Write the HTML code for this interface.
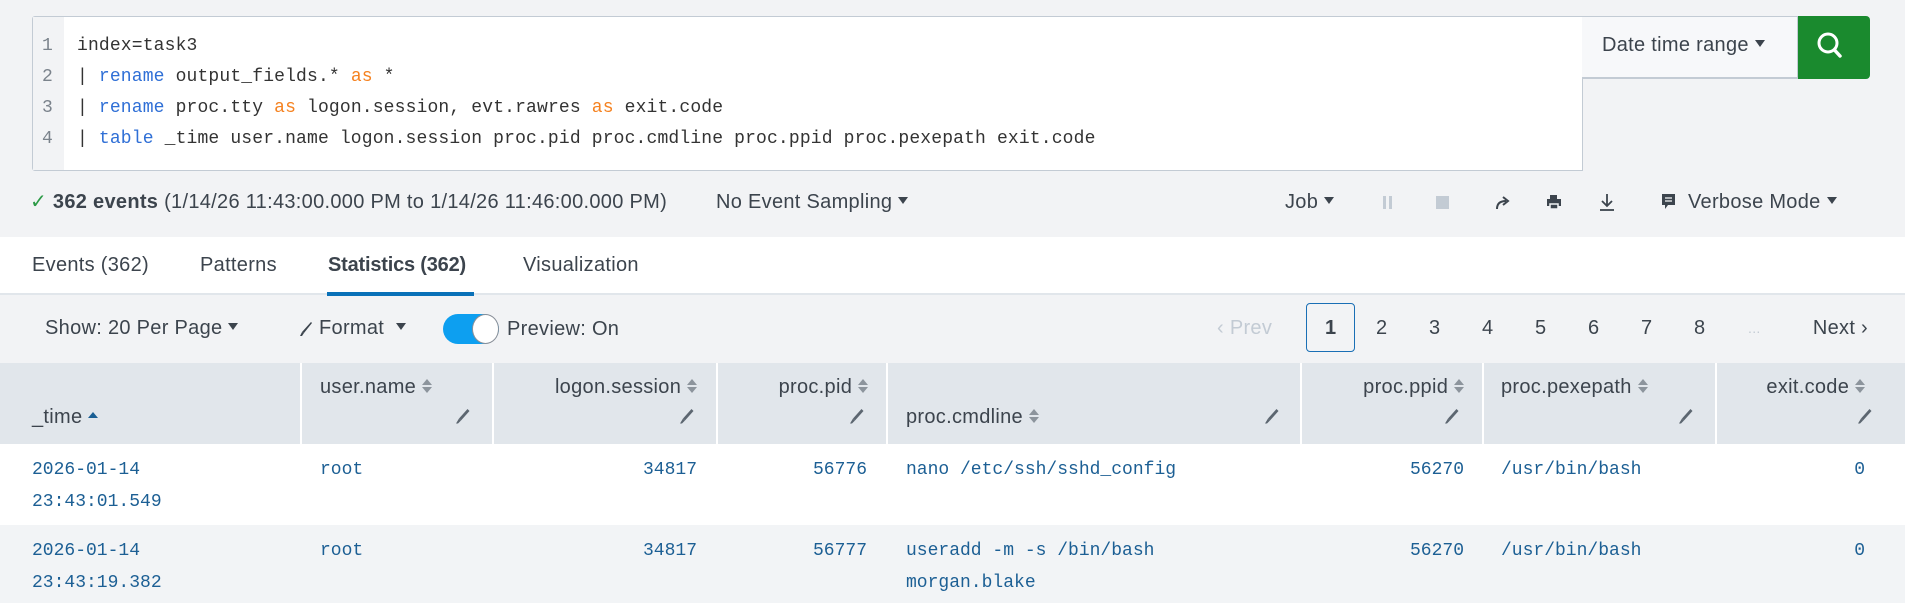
<!DOCTYPE html>
<html><head><meta charset="utf-8"><style>
*{margin:0;padding:0;box-sizing:border-box}
body{width:1905px;height:603px;background:#f2f3f5;font-family:"Liberation Sans",sans-serif;color:#3c444d;position:relative;overflow:hidden}
.a{position:absolute;white-space:nowrap}
.mono{font-family:"Liberation Mono",monospace}
.t{font-size:20px;line-height:22px;letter-spacing:0.3px}
.code{font-size:18px;line-height:22px;color:#333;letter-spacing:0.15px}
.kw{color:#2f6fd6}.as{color:#f58220}
.ln{color:#7b838c;font-size:18px;line-height:22px;font-family:"Liberation Mono",monospace}
.car{display:inline-block;width:0;height:0;border-left:5px solid transparent;border-right:5px solid transparent;border-top:7px solid #3c444d;vertical-align:middle;margin-left:6px;position:relative;top:-2px}
.d{font-family:"Liberation Mono",monospace;font-size:18px;line-height:22px;color:#1c5f94}
.hd{font-size:20px;line-height:22px;color:#3c444d;letter-spacing:0.3px}
.col{position:absolute;top:363px;height:81px;border-left:2px solid #fff}
</style></head><body>

<div class="a" style="left:32px;top:16px;width:1551px;height:155px;background:#fff;border:1px solid #c3cbd4;border-radius:3px 0 0 3px"></div>
<div class="a" style="left:33px;top:17px;width:31px;height:153px;background:#f2f3f5"></div>
<div class="a ln" style="left:42px;top:35px">1</div>
<div class="a ln" style="left:42px;top:66px">2</div>
<div class="a ln" style="left:42px;top:97px">3</div>
<div class="a ln" style="left:42px;top:128px">4</div>
<div class="a mono code" style="left:77px;top:35px">index=task3</div>
<div class="a mono code" style="left:77px;top:66px">| <span class="kw">rename</span> output_fields.* <span class="as">as</span> *</div>
<div class="a mono code" style="left:77px;top:97px">| <span class="kw">rename</span> proc.tty <span class="as">as</span> logon.session, evt.rawres <span class="as">as</span> exit.code</div>
<div class="a mono code" style="left:77px;top:128px">| <span class="kw">table</span> _time user.name logon.session proc.pid proc.cmdline proc.ppid proc.pexepath exit.code</div>

<div class="a" style="left:1582px;top:16px;width:216px;height:63px;background:#f7f8fa;border:1px solid #c3cbd4;border-left:none;border-bottom:2px solid #c3cbd4"></div>
<div class="a t" style="left:1602px;top:34px;color:#3c444d">Date time range<span class="car"></span></div>
<div class="a" style="left:1798px;top:16px;width:72px;height:63px;background:#1a8a2e;border-radius:0 4px 4px 0"></div>
<svg class="a" style="left:1815px;top:30px" width="30" height="32" viewBox="0 0 30 32"><circle cx="13" cy="13" r="9" fill="none" stroke="#fff" stroke-width="3"/><line x1="19.5" y1="20" x2="25" y2="26" stroke="#fff" stroke-width="3.5" stroke-linecap="round"/></svg>

<div class="a t" style="left:30px;top:191px;color:#3c444d"><span style="color:#2c9a46">✓</span> <b>362 events</b> (1/14/26 11:43:00.000 PM to 1/14/26 11:46:00.000 PM)</div>
<div class="a t" style="left:716px;top:191px">No Event Sampling<span class="car"></span></div>
<div class="a t" style="left:1285px;top:191px">Job<span class="car"></span></div>
<div class="a" style="left:1383px;top:196px;width:3px;height:13px;background:#c3cbd4"></div>
<div class="a" style="left:1389px;top:196px;width:3px;height:13px;background:#c3cbd4"></div>
<div class="a" style="left:1436px;top:196px;width:13px;height:13px;background:#c3cbd4"></div>
<svg class="a" style="left:1494px;top:193px" width="18" height="18" viewBox="0 0 18 18"><path d="M3 16 Q3 8 12 8" fill="none" stroke="#3c444d" stroke-width="2"/><path d="M9 4 L14 8 L9 12" fill="none" stroke="#3c444d" stroke-width="2"/></svg>
<svg class="a" style="left:1546px;top:194px" width="16" height="16" viewBox="0 0 16 16"><rect x="4" y="1" width="7" height="5" fill="#3c444d"/><rect x="1" y="5" width="14" height="7" fill="#3c444d"/><rect x="4" y="10" width="8" height="5" fill="#3c444d" stroke="#f2f3f5" stroke-width="1.5"/></svg>
<svg class="a" style="left:1598px;top:192px" width="18" height="20" viewBox="0 0 18 20"><line x1="9" y1="2" x2="9" y2="14" stroke="#3c444d" stroke-width="1.8"/><path d="M4 9 L9 14 L14 9" fill="none" stroke="#3c444d" stroke-width="1.8"/><line x1="2" y1="18" x2="16" y2="18" stroke="#3c444d" stroke-width="1.8"/></svg>
<svg class="a" style="left:1661px;top:193px" width="16" height="18" viewBox="0 0 16 18"><path d="M1 1 H14 V12 H7 L4 16 V12 H1 Z" fill="#3c444d"/><line x1="4" y1="5" x2="11" y2="5" stroke="#f2f3f5" stroke-width="1.3"/><line x1="4" y1="8" x2="11" y2="8" stroke="#f2f3f5" stroke-width="1.3"/></svg>
<div class="a t" style="left:1688px;top:191px">Verbose Mode<span class="car"></span></div>

<div class="a" style="left:0;top:237px;width:1905px;height:58px;background:#fff;border-bottom:2px solid #e1e6eb"></div>
<div class="a t" style="left:32px;top:254px">Events (362)</div>
<div class="a t" style="left:200px;top:254px">Patterns</div>
<div class="a t" style="left:328px;top:254px;font-weight:bold;letter-spacing:-0.2px">Statistics (362)</div>
<div class="a t" style="left:523px;top:254px">Visualization</div>
<div class="a" style="left:327px;top:292px;width:147px;height:4px;background:#0a71b8"></div>

<div class="a t" style="left:45px;top:317px">Show: 20 Per Page<span class="car"></span></div>
<svg class="a" style="left:299px;top:321px" width="14" height="16" viewBox="0 0 14 16"><path d="M12 1 L13 2 L5 12 L3 11 Z" fill="#3c444d"/><path d="M3 11 L5 12 L3 15 L1 15 Z" fill="#3c444d"/></svg>
<div class="a t" style="left:319px;top:317px">Format<span class="car" style="margin-left:12px"></span></div>
<div class="a" style="left:443px;top:314px;width:56px;height:30px;background:#0d9ff0;border-radius:15px"></div>
<div class="a" style="left:472px;top:314px;width:27px;height:30px;background:#fff;border-radius:50%;border:1px solid #8a9099"></div>
<div class="a t" style="left:507px;top:318px">Preview: On</div>

<div class="a t" style="left:1217px;top:317px;color:#c3cbd4">‹ Prev</div>
<div class="a" style="left:1306px;top:303px;width:49px;height:49px;border:1px solid #1a6fb5;border-radius:4px"></div>
<div class="a t" style="left:1325px;top:317px;font-weight:bold">1</div>
<div class="a t" style="left:1376px;top:317px">2</div>
<div class="a t" style="left:1429px;top:317px">3</div>
<div class="a t" style="left:1482px;top:317px">4</div>
<div class="a t" style="left:1535px;top:317px">5</div>
<div class="a t" style="left:1588px;top:317px">6</div>
<div class="a t" style="left:1641px;top:317px">7</div>
<div class="a t" style="left:1694px;top:317px">8</div>
<div class="a t" style="left:1748px;top:317px;color:#c3cbd4;font-size:14px">...</div>
<div class="a t" style="right:37px;top:317px">Next ›</div>

<div class="a" style="left:0;top:363px;width:1905px;height:81px;background:#e1e6eb"></div>
<div class="col" style="left:300px"></div><div class="col" style="left:492px"></div><div class="col" style="left:716px"></div><div class="col" style="left:886px"></div><div class="col" style="left:1300px"></div><div class="col" style="left:1482px"></div><div class="col" style="left:1715px"></div>

<svg width="0" height="0" style="position:absolute"><defs>
<g id="srt"><path d="M0 7 L5 1 L10 7 Z" fill="#8c949c"/><path d="M0 9 L5 15 L10 9 Z" fill="#8c949c"/></g>
<g id="pen"><path d="M12.5 1 L14.5 3 L6 12.5 L4 10.5 Z" fill="#5c6670"/><path d="M4 10.5 L6 12.5 L3 15.5 L1 15.5 Z" fill="#5c6670"/></g>
</defs></svg>

<div class="a hd" style="left:32px;top:406px">_time <svg width="10" height="8" style="vertical-align:4px"><path d="M0 7 L5 1 L10 7 Z" fill="#1a5f94"/></svg></div>
<div class="a hd" style="left:320px;top:376px">user.name <svg width="10" height="16" style="vertical-align:-1px"><use href="#srt"/></svg></div>
<svg class="a" style="left:455px;top:408px" width="16" height="17"><use href="#pen"/></svg>
<div class="a hd" style="right:1208px;top:376px">logon.session <svg width="10" height="16" style="vertical-align:-1px"><use href="#srt"/></svg></div>
<svg class="a" style="left:679px;top:408px" width="16" height="17"><use href="#pen"/></svg>
<div class="a hd" style="right:1037px;top:376px">proc.pid <svg width="10" height="16" style="vertical-align:-1px"><use href="#srt"/></svg></div>
<svg class="a" style="left:849px;top:408px" width="16" height="17"><use href="#pen"/></svg>
<div class="a hd" style="left:906px;top:406px">proc.cmdline <svg width="10" height="16" style="vertical-align:-1px"><use href="#srt"/></svg></div>
<svg class="a" style="left:1264px;top:408px" width="16" height="17"><use href="#pen"/></svg>
<div class="a hd" style="right:441px;top:376px">proc.ppid <svg width="10" height="16" style="vertical-align:-1px"><use href="#srt"/></svg></div>
<svg class="a" style="left:1444px;top:408px" width="16" height="17"><use href="#pen"/></svg>
<div class="a hd" style="left:1501px;top:376px">proc.pexepath <svg width="10" height="16" style="vertical-align:-1px"><use href="#srt"/></svg></div>
<svg class="a" style="left:1678px;top:408px" width="16" height="17"><use href="#pen"/></svg>
<div class="a hd" style="right:40px;top:376px">exit.code <svg width="10" height="16" style="vertical-align:-1px"><use href="#srt"/></svg></div>
<svg class="a" style="left:1857px;top:408px" width="16" height="17"><use href="#pen"/></svg>

<div class="a" style="left:0;top:444px;width:1905px;height:81px;background:#fff"></div>
<div class="a" style="left:0;top:525px;width:1905px;height:78px;background:#f2f4f6"></div>

<div class="a d" style="left:32px;top:459px">2026-01-14</div>
<div class="a d" style="left:32px;top:491px">23:43:01.549</div>
<div class="a d" style="left:320px;top:459px">root</div>
<div class="a d" style="right:1208px;top:459px">34817</div>
<div class="a d" style="right:1038px;top:459px">56776</div>
<div class="a d" style="left:906px;top:459px">nano /etc/ssh/sshd_config</div>
<div class="a d" style="right:441px;top:459px">56270</div>
<div class="a d" style="left:1501px;top:459px">/usr/bin/bash</div>
<div class="a d" style="right:40px;top:459px">0</div>

<div class="a d" style="left:32px;top:540px">2026-01-14</div>
<div class="a d" style="left:32px;top:572px">23:43:19.382</div>
<div class="a d" style="left:320px;top:540px">root</div>
<div class="a d" style="right:1208px;top:540px">34817</div>
<div class="a d" style="right:1038px;top:540px">56777</div>
<div class="a d" style="left:906px;top:540px">useradd -m -s /bin/bash</div>
<div class="a d" style="left:906px;top:572px">morgan.blake</div>
<div class="a d" style="right:441px;top:540px">56270</div>
<div class="a d" style="left:1501px;top:540px">/usr/bin/bash</div>
<div class="a d" style="right:40px;top:540px">0</div>
</body></html>
